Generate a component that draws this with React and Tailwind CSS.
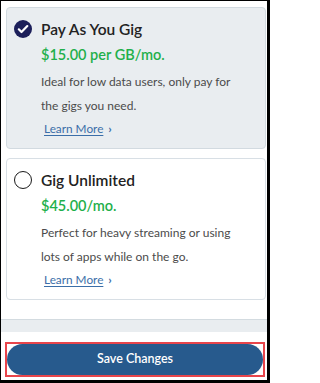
import React, { useState } from 'react';

const plans = [
  {
    id: 'payg',
    name: 'Pay As You Gig',
    price: '$15.00 per GB/mo.',
    description: 'Ideal for low data users, only pay for the gigs you need.',
  },
  {
    id: 'unlimited',
    name: 'Gig Unlimited',
    price: '$45.00/mo.',
    description: 'Perfect for heavy streaming or using lots of apps while on the go.',
  },
];

// Filled navy circle with a white tick
function CheckedIcon() {
  return (
    <svg width="18" height="18" viewBox="0 0 18 18" className="shrink-0">
      <circle cx="9" cy="9" r="9" fill="#1c1f5a" />
      <path d="M4.8 9.3l2.7 2.7 5.8-5.9" fill="none" stroke="#fff" strokeWidth="2.2" strokeLinecap="round" strokeLinejoin="round" />
    </svg>
  );
}

function EmptyIcon() {
  return <span className="block w-[18px] h-[18px] shrink-0 rounded-full border-[1.5px] border-[#1a1a1a] bg-white" />;
}

function PlanCard({ plan, selected, onSelect }) {
  return (
    <div
      onClick={onSelect}
      className={
        selected
          ? 'rounded-[4px] border border-[#d2dae0] bg-[#e9edf0] pl-[7px] pt-[11px] pb-[9px] cursor-pointer'
          : 'rounded-[4px] border border-[#d8dfe5] bg-white pl-[7px] pt-[11px] pb-[9px] cursor-pointer'
      }
    >
      {/* Radio + plan name */}
      <div className="flex items-center gap-[9px] h-[20px]">
        {selected ? <CheckedIcon /> : <EmptyIcon />}
        <span className="text-[15.5px] leading-[20px] font-semibold text-[#222]">{plan.name}</span>
      </div>

      <div className="pl-[27px]">
        <p className="mt-[6px] text-[14.5px] leading-[20px] font-semibold text-[#1fb04b]">{plan.price}</p>
        <p className="mt-[5px] w-[206px] text-[12px] leading-[24px] text-[#4b4b4b]">{plan.description}</p>
        <a href="#" className="mt-[1px] ml-[3px] flex w-fit items-center gap-[5px] text-[11.8px] leading-[20px] text-[#3b6ea8]">
          <span className="underline underline-offset-2">Learn More</span>
          <span className="font-bold text-[12px]">›</span>
        </a>
      </div>
    </div>
  );
}

export default function App() {
  const [selected, setSelected] = useState('payg');

  return (
    <div
      className="w-[270px] h-[383px] bg-white border-l border-t border-r-[3px] border-b-[3px] border-black flex flex-col"
      style={{ fontFamily: 'Lato, "Noto Sans", sans-serif' }}
    >
      {/* Plan options */}
      <div className="pl-[5px] pr-[1px] pt-[6px] flex flex-col gap-[9px]">
        {plans.map((plan) => (
          <PlanCard key={plan.id} plan={plan} selected={selected === plan.id} onSelect={() => setSelected(plan.id)} />
        ))}
      </div>

      {/* Divider band */}
      <div className="mt-[19px] h-[13px] border-t border-[#d3dbe0] bg-[#e9edf0]" />

      {/* Save button */}
      <div className="mt-[10px] ml-[4px] w-[260px] border-2 border-[#e8454b]">
        <button className="w-full h-[31px] rounded-full bg-[#275a8d] text-white text-[12.5px] font-semibold">
          Save Changes
        </button>
      </div>
    </div>
  );
}
